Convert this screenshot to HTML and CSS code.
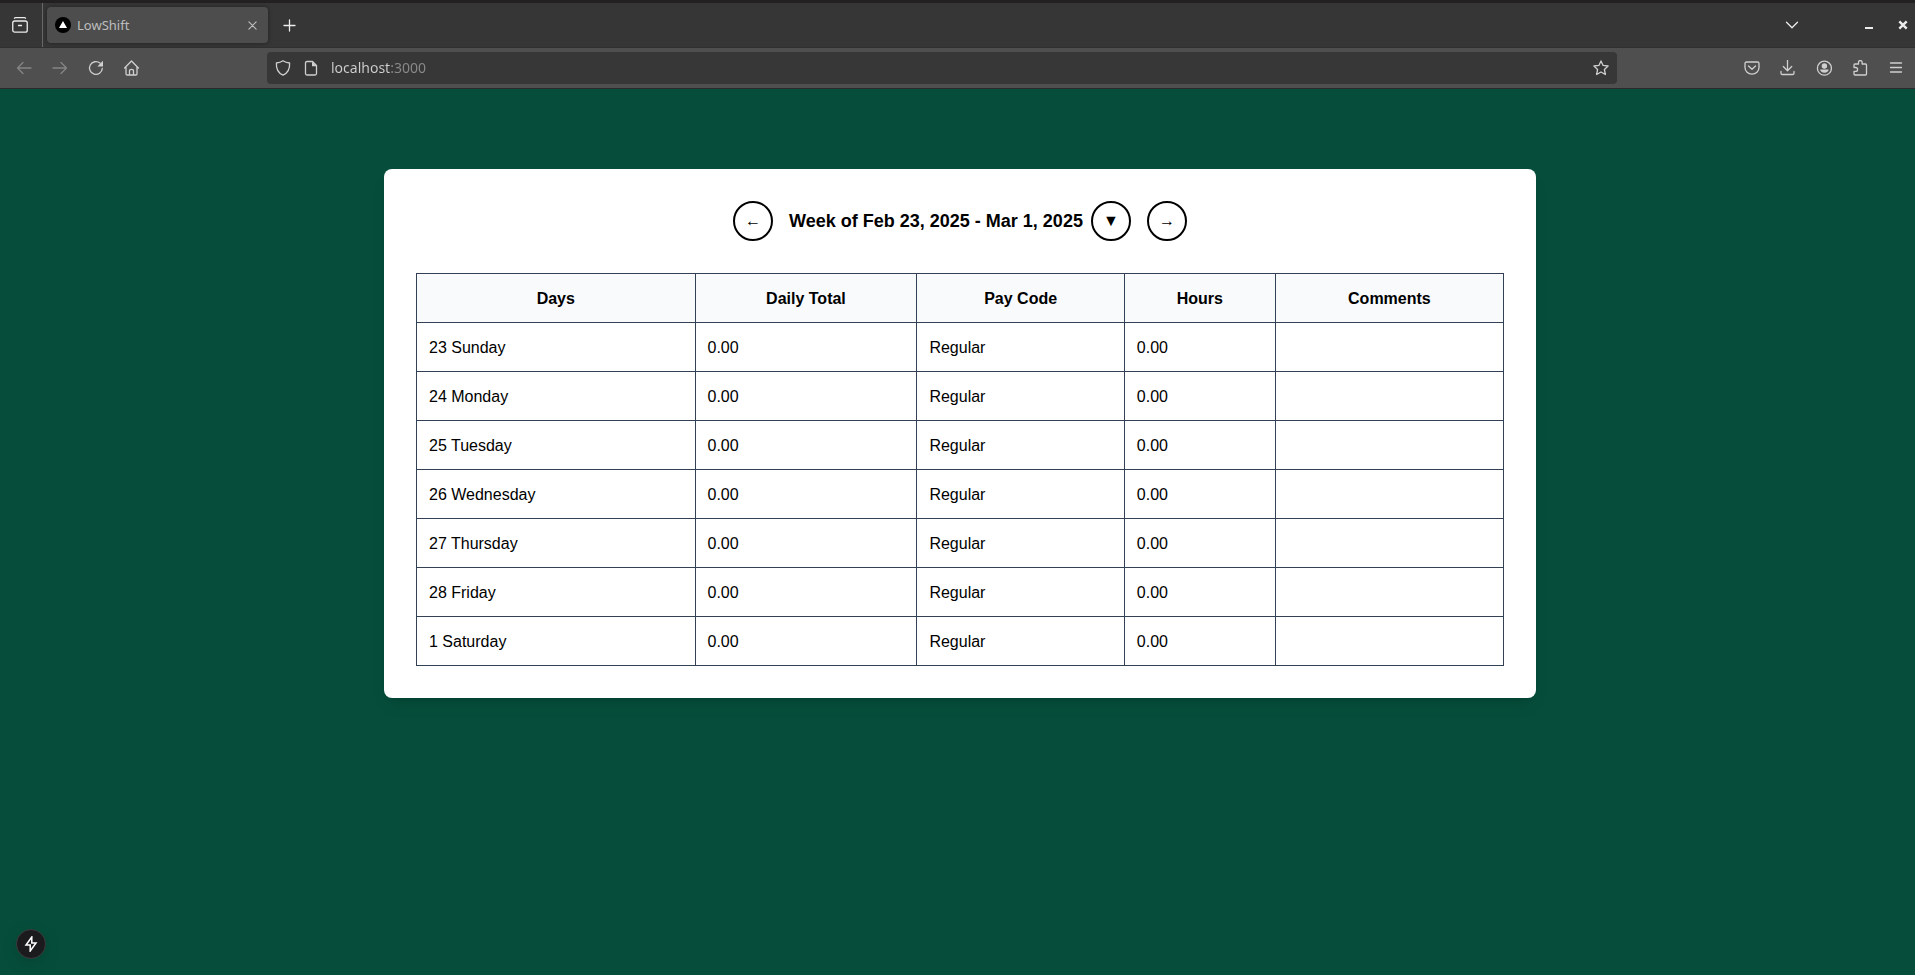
FILE: index.html
```html
<!DOCTYPE html>
<html lang="en">
<head>
<meta charset="utf-8">
<title>LowShift</title>
<link rel="stylesheet" href="styles.css">
</head>
<body>
<header class="browser">
  <div class="tabbar">
    <button class="icon-btn view-btn" aria-label="Firefox View">
      <svg class="icon" viewBox="0 0 16 16"><path d="M2.5 1.2C2.8.7 3.3.7 3.8.7h8.400c.5 0 1 0 1.300.5"/><rect x=".75" y="4" width="14.500" height="11.200" rx="2"/><path d="M6.500 8.500h3"/></svg>
    </button>
    <div class="tab">
      <svg class="favicon" viewBox="0 0 16 16"><circle cx="8" cy="8" r="8"/><path d="M8 4l4 7H4z"/></svg>
      <span class="tab-title">LowShift</span>
      <button class="tab-close" aria-label="Close tab">
        <svg class="icon-small" viewBox="0 0 10 10"><path d="M1 1l8 8M9 1L1 9"/></svg>
      </button>
    </div>
    <button class="icon-btn bright" aria-label="New tab">
      <svg class="icon" viewBox="0 0 16 16"><path d="M8.500 3v11M3 8.500h11"/></svg>
    </button>
    <div class="window-controls">
      <button class="icon-btn bright" aria-label="List all tabs">
        <svg class="icon" viewBox="0 0 16 16"><path d="M1.500 5.200L7 10.700l5.500-5.500"/></svg>
      </button>
      <button class="icon-btn bright minimize" aria-label="Minimize">
        <svg class="icon" viewBox="0 0 16 16"><path class="solid" d="M4 10h8v2H4z"/></svg>
      </button>
      <button class="icon-btn bright" aria-label="Close window">
        <svg class="icon" viewBox="0 0 16 16"><path class="heavy" d="M4.300 4.300l7.400 7.400M11.700 4.300l-7.400 7.400"/></svg>
      </button>
    </div>
  </div>
  <nav class="toolbar" aria-label="Browser toolbar">
    <button class="icon-btn faded" aria-label="Back">
      <svg class="icon" viewBox="0 0 16 16"><path d="M15 8H1.500M7 2.500L1.500 8 7 13.500"/></svg>
    </button>
    <button class="icon-btn faded" aria-label="Forward">
      <svg class="icon" viewBox="0 0 16 16"><path d="M1 8h13.500M9 2.500L14.500 8 9 13.500"/></svg>
    </button>
    <button class="icon-btn" aria-label="Reload">
      <svg class="icon" viewBox="0 0 16 16"><path d="M14.300 8.500A6.400 6.400 0 1 1 12 3.100"/><path class="solid" d="M15 .8v5.700H9.300z"/></svg>
    </button>
    <button class="icon-btn" aria-label="Home">
      <svg class="icon" viewBox="0 0 16 16"><path d="M.6 8L7.500 1l6.900 7M2 6.800v7c0 .8.400 1.200 1.200 1.200h8.600c.8 0 1.200-.4 1.200-1.200v-7M5.500 15v-4c0-1 .6-1.700 2-1.700s2 .7 2 1.700v4"/></svg>
    </button>
    <div class="urlbar">
      <svg class="icon" viewBox="0 0 16 16"><path d="M8 .8c2 1.400 4.300 2 6.600 2.200.3 4.800-.9 9.600-6.600 12.200C2.300 12.600 1.100 7.800 1.400 3 3.700 2.800 6 2.200 8 .8z"/></svg>
      <svg class="icon" viewBox="0 0 16 16"><path d="M9.500 1.500H4C3 1.500 2.500 2 2.500 3v10.500c0 1 .5 1.500 1.500 1.500h8c1 0 1.500-.5 1.500-1.500v-8z"/><path class="solid" d="M9 1.500v4.700h4.800z"/></svg>
      <input class="url" type="text" value="localhost:3000" aria-label="Address">
      <button class="star" aria-label="Bookmark this page">
        <svg class="icon" viewBox="0 0 16 16"><path d="M8 .9l2.100 4.500 5 .6-3.700 3.500 1 5L8 12l-4.400 2.500 1-5L.9 6l5-.6z"/></svg>
      </button>
    </div>
    <button class="icon-btn" aria-label="Save to Pocket">
      <svg class="icon" viewBox="0 0 16 16"><path d="M2.500 2h11c1 0 1.500.5 1.500 1.500v4a7 6.700 0 0 1-14 0v-4C1 2.500 1.500 2 2.500 2zM4.500 6L8 9.200 11.500 6"/></svg>
    </button>
    <button class="icon-btn" aria-label="Downloads">
      <svg class="icon" viewBox="0 0 16 16"><path d="M7.500 0v10.500M3.300 6.500l4.200 4.200 4.200-4.200M1 11.500v1.700c0 .8.500 1.300 1.300 1.300h10.400c.8 0 1.300-.5 1.300-1.300v-1.700"/></svg>
    </button>
    <button class="icon-btn" aria-label="Account">
      <svg class="icon" viewBox="0 0 16 16"><circle cx="8.400" cy="8.200" r="7"/><circle class="solid" cx="8.400" cy="6" r="2.700"/><path class="solid" d="M4.200 9.500h8.400c0 2-1.700 3.200-4.200 3.200s-4.200-1.200-4.200-3.200z"/></svg>
    </button>
    <button class="icon-btn" aria-label="Extensions">
      <svg class="icon" viewBox="0 0 16 16"><path d="M2 7.500V5c0-.7.3-1 1-1h3.500V2.300a1.800 1.800 0 0 1 3.600 0V4H13.500c.7 0 1 .3 1 1v9c0 .7-.3 1-1 1H3c-.7 0-1-.3-1-1v-2.700h1.700a1.900 1.900 0 0 0 0-3.800z"/></svg>
    </button>
    <button class="icon-btn" aria-label="Application menu">
      <svg class="icon" viewBox="0 0 16 16"><path d="M2.500 3h11M2.500 7.500h11M2.500 12h11"/></svg>
    </button>
  </nav>
</header>

<main class="page">
  <section class="card">
    <div class="week-nav">
      <button class="round-btn" aria-label="Previous week">←</button>
      <div class="week-label">
        <h1 class="week-title">Week of Feb 23, 2025 - Mar 1, 2025</h1>
        <button class="round-btn" aria-label="Choose week">▼</button>
      </div>
      <button class="round-btn" aria-label="Next week">→</button>
    </div>
    <table class="timesheet">
      <thead>
        <tr><th>Days</th><th>Daily Total</th><th>Pay Code</th><th>Hours</th><th>Comments</th></tr>
      </thead>
      <tbody>
        <tr><td>23 Sunday</td><td>0.00</td><td>Regular</td><td>0.00</td><td></td></tr>
        <tr><td>24 Monday</td><td>0.00</td><td>Regular</td><td>0.00</td><td></td></tr>
        <tr><td>25 Tuesday</td><td>0.00</td><td>Regular</td><td>0.00</td><td></td></tr>
        <tr><td>26 Wednesday</td><td>0.00</td><td>Regular</td><td>0.00</td><td></td></tr>
        <tr><td>27 Thursday</td><td>0.00</td><td>Regular</td><td>0.00</td><td></td></tr>
        <tr><td>28 Friday</td><td>0.00</td><td>Regular</td><td>0.00</td><td></td></tr>
        <tr><td>1 Saturday</td><td>0.00</td><td>Regular</td><td>0.00</td><td></td></tr>
      </tbody>
    </table>
  </section>
</main>

<button class="dev-badge" aria-label="Developer tools">
  <svg class="bolt" viewBox="0 0 16 16"><path d="M8.800 1L3 9h4.200v6L13 7H8.800z"/></svg>
</button>
</body>
</html>
```

FILE: styles.css
```css
* {
  box-sizing: border-box;
}

body {
  margin: 0;
  min-height: 100vh;
  background: #064e3b;
  color: #000;
  font: 16px/24px "Liberation Sans", Arial, sans-serif;
}

button {
  margin: 0;
  padding: 0;
  border: 0;
  background: none;
  color: inherit;
  font: inherit;
}

/* Browser frame */
.browser {
  border-top: 3px solid #222021;
  border-bottom: 1px solid #2b2b2b;
  background: #4f4f4f;
  color: #cfcfcf;
  font: 14px/20px "Noto Sans", sans-serif;
}

.tabbar {
  display: flex;
  align-items: center;
  height: 45px;
  background: #363636;
  border-bottom: 1px solid #303030;
}

.icon {
  flex: none;
  display: block;
  width: 16px;
  height: 16px;
}

.icon path,
.icon circle,
.icon rect,
.icon-small path {
  fill: none;
  stroke: currentColor;
  stroke-width: 1.3;
  stroke-linecap: round;
  stroke-linejoin: round;
}

.icon .solid {
  fill: currentColor;
  stroke: none;
}

.icon .heavy {
  stroke-width: 2.4;
  stroke-linecap: butt;
}

.icon-btn {
  display: flex;
  align-items: center;
  justify-content: center;
  width: 36px;
  height: 32px;
}

.bright {
  color: #ececec;
}

.faded {
  color: #858585;
}

.view-btn {
  width: 43px;
  height: 44px;
  padding-right: 2px;
  border-right: 1px solid #686868;
  color: #ececec;
}

.tab {
  display: flex;
  align-items: center;
  width: 221px;
  height: 36px;
  margin: 0 3px 0 4px;
  padding: 0 8px;
  border-radius: 4px;
  background: #4d4d4d;
  box-shadow: 0 0 4px rgba(0, 0, 0, 0.4);
  color: #bdbdbd;
}

.favicon {
  width: 16px;
  height: 16px;
}

.favicon path {
  fill: #fff;
}

.tab-title {
  flex: 1;
  padding-left: 6px;
  font-size: 13px;
}

.tab-close {
  display: flex;
  align-items: center;
  justify-content: center;
  width: 16px;
  height: 24px;
}

.icon-small {
  width: 9px;
  height: 9px;
}

.window-controls {
  display: flex;
  margin-left: auto;
}

.minimize {
  margin-left: 40px;
}

.window-controls .icon-btn:last-child {
  width: 24px;
  margin-left: 4px;
}

.toolbar {
  display: flex;
  align-items: center;
  height: 40px;
  padding: 0 1px 0 6px;
}

.urlbar {
  flex: 1;
  display: flex;
  align-items: center;
  gap: 12px;
  height: 32px;
  margin: 0 117px;
  padding: 0 8px;
  border-radius: 4px;
  background: #373737;
}

.url {
  flex: 1;
  min-width: 0;
  padding: 0;
  border: 0;
  outline: 0;
  font: 14px/20px "Noto Sans", sans-serif;
  color: transparent;
  background: linear-gradient(90deg, #cfcfcf 59px, #8a8a8a 59px);
  -webkit-background-clip: text;
  background-clip: text;
}

/* Timesheet */
.page {
  padding: 80px 0 80px 5px;
}

.card {
  max-width: 1152px;
  margin: 0 auto;
  padding: 32px;
  border-radius: 8px;
  background: #fff;
  box-shadow: 0 10px 15px -3px rgba(0, 0, 0, 0.1), 0 4px 6px -4px rgba(0, 0, 0, 0.1);
}

.week-nav {
  display: flex;
  align-items: center;
  justify-content: center;
  gap: 16px;
  margin-bottom: 32px;
}

.week-label {
  display: flex;
  align-items: center;
  gap: 8px;
}

.week-title {
  margin: 0;
  font-size: 18px;
  line-height: 28px;
}

.round-btn {
  width: 40px;
  height: 40px;
  border: 2px solid #000;
  border-radius: 50%;
  font-size: 16px;
}

.timesheet {
  width: 100%;
  border-collapse: collapse;
}

.timesheet th,
.timesheet td {
  height: 49px;
  padding: 13px 12px 11px;
  border: 1px solid #334155;
}

.timesheet th {
  background: #f8fafc;
}

.dev-badge {
  position: fixed;
  left: 16px;
  bottom: 16px;
  display: flex;
  align-items: center;
  justify-content: center;
  width: 30px;
  height: 30px;
  border: 1px solid #3c3c3e;
  border-radius: 50%;
  background: #1b1b1e;
  box-shadow: 0 4px 16px rgba(0, 0, 0, 0.15);
}

.bolt {
  width: 16px;
  height: 16px;
  fill: none;
  stroke: #fff;
  stroke-width: 1.5;
}
```
